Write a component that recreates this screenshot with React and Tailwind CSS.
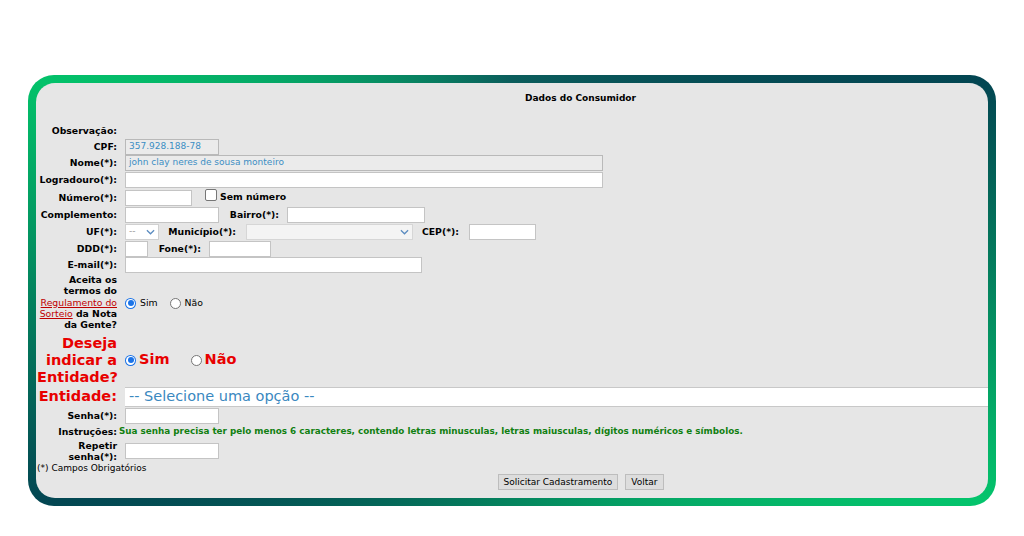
import React from 'react';

const font = { fontFamily: '"DejaVu Sans", Verdana, sans-serif' };

function Label({ children, className = '' }) {
  return (
    <div className={`w-[80px] shrink-0 text-right font-bold text-[9.3px] leading-[11.3px] text-black whitespace-nowrap ${className}`}>
      {children}
    </div>
  );
}

function Field({ w, disabled, value, h = 'h-[16px]' }) {
  return (
    <div
      className={`${w} ${h} shrink-0 border flex items-center px-[3px] text-[9px] text-[#3b8ec4] ${
        disabled ? 'bg-[#ebebeb] border-[#b9b9b9]' : 'bg-white border-[#c4c4c4]'
      }`}
    >
      {value}
    </div>
  );
}

function Chevron({ className = '' }) {
  return (
    <svg viewBox="0 0 10 6" className={`w-[9px] h-[6px] ${className}`}>
      <path d="M1 1l4 4 4-4" fill="none" stroke="#5b8cc0" strokeWidth="1.4" />
    </svg>
  );
}

function Radio({ checked }) {
  return checked ? (
    <span className="block w-[11px] h-[11px] rounded-full bg-[#1a73e8] shrink-0 p-[1px]">
      <span className="flex w-[9px] h-[9px] rounded-full bg-white items-center justify-center">
        <span className="block w-[6px] h-[6px] rounded-full bg-[#1a73e8]" />
      </span>
    </span>
  ) : (
    <span className="block w-[11px] h-[11px] rounded-full border border-[#767676] bg-white shrink-0" />
  );
}

function Row({ h, children, className = '' }) {
  return <div className={`flex items-center gap-[8px] ${h} ${className}`}>{children}</div>;
}

function Text({ w, children }) {
  return <div className={`${w} shrink-0 text-right font-bold text-[9.3px] whitespace-nowrap`}>{children}</div>;
}

export default function App() {
  return (
    <div className="w-[1024px] h-[536px] bg-white pt-[75px] pl-[28px]" style={font}>
      <div className="w-[968px] h-[431px] rounded-[26px] p-[8px] bg-[conic-gradient(from_0deg,#0b5d5c,#034652_66deg,#04c46c_114deg,#05845e_180deg,#034652_246deg,#03c26a_294deg,#0b5d5c)]">
        <div className="w-full h-full rounded-[19px] bg-[#e6e6e6] overflow-hidden">
          <div className="w-[1088px] pl-[1px]">
            {/* Title */}
            <div className="h-[39px] pt-[9px] text-center font-bold text-[9px] leading-[12px] text-black">
              Dados do Consumidor
            </div>

            <Row h="h-[17px]" className="pt-[1px]">
              <Label>Observação:</Label>
            </Row>
            <Row h="h-[16px]">
              <Label>CPF:</Label>
              <Field w="w-[94px]" disabled value="357.928.188-78" />
            </Row>
            <Row h="h-[16px]">
              <Label>Nome(*):</Label>
              <Field w="w-[478px]" disabled value="john clay neres de sousa monteiro" />
            </Row>
            <Row h="h-[17px]">
              <Label>Logradouro(*):</Label>
              <Field w="w-[478px]" />
            </Row>
            <Row h="h-[19px]">
              <Label>Número(*):</Label>
              <Field w="w-[67px]" />
              <div className="flex items-center gap-[3px] ml-[5px] -mt-[6px]">
                <span className="block w-[12px] h-[12px] rounded-[2px] border border-[#767676] bg-white" />
                <span className="font-bold text-[9.3px] mt-[5px]">Sem número</span>
              </div>
            </Row>
            <Row h="h-[16px]">
              <Label>Complemento:</Label>
              <Field w="w-[94px]" />
              <Text w="w-[52px]">Bairro(*):</Text>
              <Field w="w-[138px]" />
            </Row>
            <Row h="h-[17px]">
              <Label>UF(*):</Label>
              <div className="w-[34px] h-[16px] shrink-0 bg-white border border-[#d0d0d0] flex items-center justify-between px-[3px] text-[9px] text-[#9a9a9a]">
                <span>--</span>
                <Chevron />
              </div>
              <Text w="w-[69px]">Município(*):</Text>
              <div className="w-[167px] h-[16px] ml-[2px] shrink-0 bg-[#f4f4f4] border border-[#d6d6d6] flex items-center justify-end px-[3px]">
                <Chevron />
              </div>
              <Text w="w-[38px]">CEP(*):</Text>
              <Field w="w-[67px]" h="h-[16px] ml-[2px]" />
            </Row>
            <Row h="h-[17px]">
              <Label>DDD(*):</Label>
              <Field w="w-[23px]" />
              <Text w="w-[45px]">Fone(*):</Text>
              <Field w="w-[62px]" />
            </Row>
            <Row h="h-[16px]">
              <Label>E-mail(*):</Label>
              <Field w="w-[297px]" />
            </Row>

            {/* Termos */}
            <div className="flex items-start gap-[8px] pt-[1px] h-[61px]">
              <Label>
                Aceita os
                <br />
                termos do
                <br />
                <a className="font-normal text-[#c00000] underline">Regulamento do</a>
                <br />
                <a className="font-normal text-[#c00000] underline">Sorteio</a> da Nota
                <br />
                da Gente?
              </Label>
              <div className="flex items-center text-[9.3px] self-center -mt-[2px]">
                <Radio checked />
                <span className="ml-[4px]">Sim</span>
                <span className="ml-[12px]">
                  <Radio />
                </span>
                <span className="ml-[4px]">Não</span>
              </div>
            </div>

            {/* Deseja indicar */}
            <div className="flex items-center gap-[8px] h-[52px]">
              <div className="w-[80px] shrink-0 text-right font-bold text-[14.5px] leading-[17px] text-[#e80000] whitespace-nowrap">
                Deseja
                <br />
                indicar a
                <br />
                Entidade?
              </div>
              <div className="flex items-center font-bold text-[14.5px] text-[#e80000]">
                <Radio checked />
                <span className="ml-[3px]">Sim</span>
                <span className="ml-[21px]">
                  <Radio />
                </span>
                <span className="ml-[3px]">Não</span>
              </div>
            </div>

            <Row h="h-[20px]" className="mt-[1px]">
              <div className="w-[80px] shrink-0 text-right font-bold text-[14.5px] text-[#e80000]">Entidade:</div>
              <div className="w-[960px] h-[20px] bg-white border-y border-[#c8c8c8] flex items-center px-[4px] text-[14.5px] text-[#3a88c0]">
                -- Selecione uma opção --
              </div>
            </Row>
            <Row h="h-[17px]">
              <Label>Senha(*):</Label>
              <Field w="w-[94px]" />
            </Row>
            <div className="flex items-center gap-[2px] h-[16px]">
              <Label>Instruções:</Label>
              <span className="font-bold text-[8.8px] text-[#118011] whitespace-nowrap">
                Sua senha precisa ter pelo menos 6 caracteres, contendo letras minusculas, letras maiusculas, dígitos numéricos e símbolos.
              </span>
            </div>
            <Row h="h-[22px]">
              <Label>
                Repetir
                <br />
                senha(*):
              </Label>
              <Field w="w-[94px]" />
            </Row>
            <div className="h-[12px] text-[9px] leading-[12px] text-black">(*) Campos Obrigatórios</div>
            <div className="flex justify-center gap-[7px] text-[9px]">
              <button className="h-[16px] px-[5px] bg-[#dddddd] border border-[#bdbdbd] text-black leading-[14px]">
                Solicitar Cadastramento
              </button>
              <button className="h-[16px] px-[5px] bg-[#dddddd] border border-[#bdbdbd] text-black leading-[14px]">
                Voltar
              </button>
            </div>
          </div>
        </div>
      </div>
    </div>
  );
}
